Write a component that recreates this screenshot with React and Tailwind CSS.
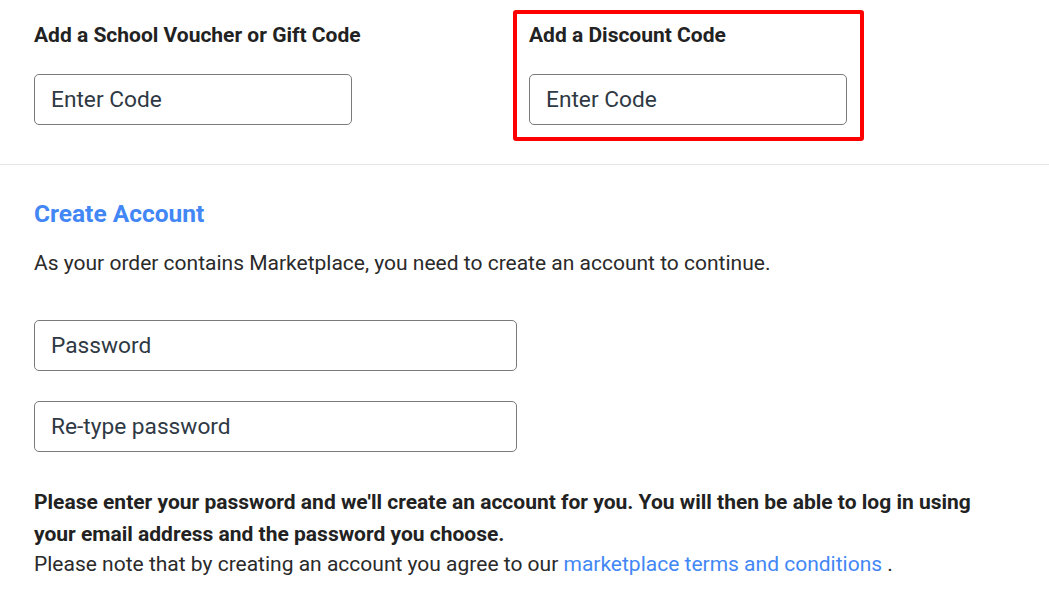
import React from 'react';

function CodeInput({ placeholder, width }) {
    return (
        <input
            type="text"
            placeholder={placeholder}
            className={`${width} h-[51px] rounded-[5px] border border-[#7a7a7a] bg-white px-4 text-[22.7px] text-[#2f3944] placeholder:text-[#2f3944] outline-none`}
        />
    );
}

export default function App() {
    return (
        <div className="min-h-screen bg-white text-[#222] font-['Roboto',sans-serif]">
            {/* codes */}
            <div className="flex items-start pl-[34px] pt-[20px] pb-[23px] border-b border-[#e6e6e6]">
                <div className="w-[479px]">
                    <h3 className="text-[21px] leading-[30px] font-bold">Add a School Voucher or Gift Code</h3>
                    <div className="mt-[24px]">
                        <CodeInput placeholder="Enter Code" width="w-[318px]" />
                    </div>
                </div>
                <div className="-mt-[10px] border-4 border-[#ff0000] rounded-[3px] pt-[6px] pl-3 pr-[13px] pb-3">
                    <h3 className="text-[21px] leading-[30px] font-bold">Add a Discount Code</h3>
                    <div className="mt-[24px]">
                        <CodeInput placeholder="Enter Code" width="w-[318px]" />
                    </div>
                </div>
            </div>

            {/* account */}
            <div className="pl-[34px] pt-[34px]">
                <h2 className="text-[24.5px] leading-[29px] font-bold text-[#4287f5]">Create Account</h2>
                <p className="mt-[20px] text-[21px] leading-[30px] text-[#2a2a2a]">
                    As your order contains Marketplace, you need to create an account to continue.
                </p>

                <div className="mt-[42px] flex flex-col gap-[30px]">
                    <CodeInput placeholder="Password" width="w-[483px]" />
                    <CodeInput placeholder="Re-type password" width="w-[483px]" />
                </div>

                <p className="mt-[34px] text-[21px] leading-[32px] font-bold text-[#222] max-w-[960px]">
                    Please enter your password and we'll create an account for you. You will then be able to log in using your email address and the password you choose.
                </p>
                <p className="text-[21px] leading-[29px] text-[#2a2a2a]">
                    Please note that by creating an account you agree to our{' '}
                    <a href="#" className="text-[#4287f5]">marketplace terms and conditions</a> .
                </p>
            </div>
        </div>
    );
}
